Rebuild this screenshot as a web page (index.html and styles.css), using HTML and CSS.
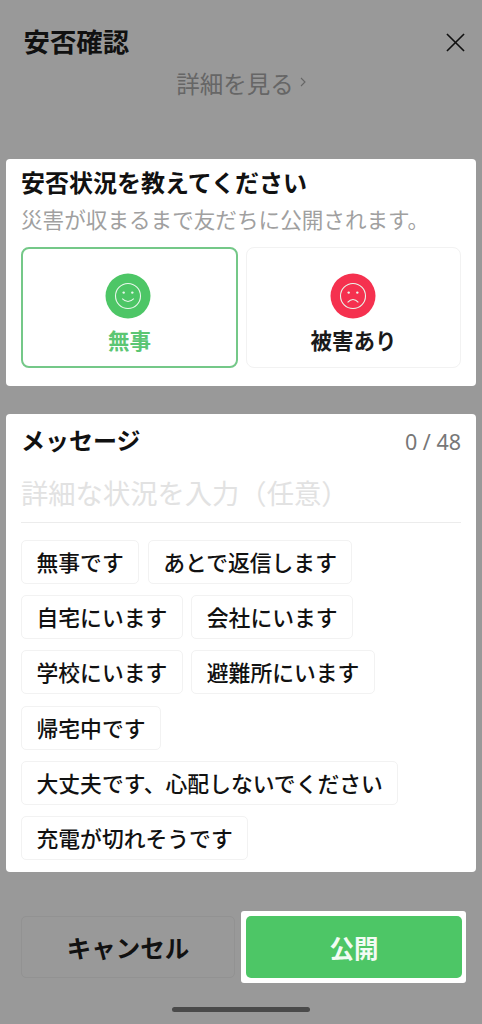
FILE: index.html
```html
<!DOCTYPE html>
<html lang="ja">
<head>
<meta charset="utf-8">
<title>安否確認</title>
<link rel="stylesheet" href="styles.css">
</head>
<body>
<div class="screen">
  <header class="header">
    <h1 class="title">安否確認</h1>
    <svg class="close" viewBox="0 0 20 20" aria-hidden="true"><path d="M1 1 L19 19 M19 1 L1 19"/></svg>
  </header>
  <div class="details"><span>詳細を見る</span><svg class="chev" viewBox="0 0 6 10" aria-hidden="true"><path d="M1 1 L5 5 L1 9"/></svg></div>

  <section class="card status">
    <h2 class="card-title">安否状況を教えてください</h2>
    <p class="sub">災害が収まるまで友だちに公開されます。</p>
    <div class="choices">
      <div class="choice on">
        <svg class="face" viewBox="0 0 46 46" aria-hidden="true"><circle class="safe" cx="23" cy="23" r="22.5"/><circle class="ring" cx="23" cy="23" r="12.5"/><circle class="eye" cx="18.7" cy="19.6" r="1.2"/><circle class="eye" cx="27.3" cy="19.6" r="1.2"/><path class="ring" d="M17.2 25.6 Q23 31.4 28.8 25.6"/></svg>
        <span class="choice-label">無事</span>
      </div>
      <div class="choice">
        <svg class="face" viewBox="0 0 46 46" aria-hidden="true"><circle class="hurt" cx="23" cy="23" r="22.5"/><circle class="ring" cx="23" cy="23" r="12.5"/><circle class="eye" cx="18.7" cy="19.6" r="1.2"/><circle class="eye" cx="27.3" cy="19.6" r="1.2"/><path class="ring" d="M17.6 29.4 Q23 23.6 28.4 29.4"/></svg>
        <span class="choice-label">被害あり</span>
      </div>
    </div>
  </section>

  <section class="card message">
    <div class="msg-head">
      <h2 class="card-title">メッセージ</h2>
      <span class="count">0 / 48</span>
    </div>
    <div class="input">詳細な状況を入力（任意）</div>
    <div class="chips">
      <span class="chip">無事です</span>
      <span class="chip">あとで返信します</span>
      <span class="chip">自宅にいます</span>
      <span class="chip">会社にいます</span>
      <span class="chip">学校にいます</span>
      <span class="chip">避難所にいます</span>
      <span class="chip">帰宅中です</span>
      <span class="chip">大丈夫です、心配しないでください</span>
      <span class="chip">充電が切れそうです</span>
    </div>
  </section>

  <footer class="actions">
    <div class="btn cancel">キャンセル</div>
    <div class="publish-wrap"><div class="btn publish">公開</div></div>
  </footer>
  <div class="home"></div>
</div>
</body>
</html>
```

FILE: styles.css
```css
* { box-sizing: border-box; }
html, body { margin: 0; padding: 0; }
body { width: 482px; height: 1024px; overflow: hidden; background: #999999; font-family: "Noto Sans CJK JP", "Noto Sans", sans-serif; color: #111; }
.screen { height: 1024px; display: flex; flex-direction: column; padding: 0 6px; }
.header { display: flex; justify-content: space-between; align-items: center; padding: 26px 11px 0 17.5px; height: 58px; }
.title { margin: -3px 0 0; font-size: 26.4px; line-height: 32px; font-weight: 700; color: #111; }
.close { width: 19px; height: 19px; fill: none; stroke: #111; stroke-width: 1.7; }
.details { display: flex; justify-content: center; align-items: flex-start; gap: 6px; margin-top: 10px; height: 30px; font-size: 23.5px; line-height: 30px; color: #666; }
.chev { width: 6px; height: 10px; margin-top: 9px; fill: none; stroke: #666; stroke-width: 1.1; }
.card { background: #fff; border-radius: 4px; padding: 0 15px; }
.status { margin-top: 60.5px; height: 227.5px; padding-top: 7px; }
.card-title { margin: 0; font-size: 24px; line-height: 32px; font-weight: 700; color: #111; }
.sub { margin: 7.5px 0 0; font-size: 21.6px; line-height: 28px; color: #a0a0a0; white-space: nowrap; }
.choices { display: grid; grid-template-columns: 217px 215px; gap: 8px; margin-top: 14px; }
.choice { height: 120.5px; border: 1px solid #f2f2f2; border-radius: 8px; display: flex; flex-direction: column; align-items: center; padding-top: 25px; }
.choice.on { border: 2px solid #74c888; padding-top: 24px; }
.face { width: 46px; height: 46px; display: block; margin-right: 2px; }
.on .face { margin-right: 3px; }
.safe { fill: #4dc666; }
.hurt { fill: #f5314f; }
.ring { fill: none; stroke: #e9f7ec; stroke-width: 1.1; }
.eye { fill: #e9f7ec; }
.choice-label { font-size: 21.5px; line-height: 30px; font-weight: 700; margin-top: 6px; color: #1a1a1a; }
.on .choice-label { color: #5cc673; }
.message { margin-top: 28px; height: 458px; padding-top: 10px; }
.msg-head { display: flex; justify-content: space-between; align-items: flex-start; }
.count { font-size: 21.5px; line-height: 32px; padding-top: 2px; color: #777; font-family: "Noto Sans", sans-serif; }
.input { margin-top: 15px; height: 50px; border-bottom: 1px solid #ececec; font-size: 27.3px; line-height: 38px; color: #e2e2e2; white-space: nowrap; }
.chips { display: flex; flex-wrap: wrap; gap: 11.4px 8.5px; margin-top: 16.5px; align-items: flex-start; }
.chip { display: block; height: 44px; padding: 0 14.5px; border: 1px solid #f2f2f2; border-radius: 5px; font-size: 21.8px; line-height: 42px; font-weight: 500; color: #111; white-space: nowrap; }
.actions { display: grid; grid-template-columns: 214px 225px; gap: 6px; margin: 39px 0 0 15px; align-items: center; width: 445px; }
.btn { border-radius: 5px; display: flex; align-items: center; justify-content: center; font-size: 24.5px; font-weight: 700; }
.cancel { height: 62px; border: 1px solid #929292; color: #111; }
.publish-wrap { background: #fff; border-radius: 3px; padding: 5px 4px 5px 5px; height: 72px; }
.publish { height: 62px; background: #4dc666; color: #f2fbf4; }
.home { width: 138px; height: 5px; background: #4a4a4a; border-radius: 3px; margin: 24px auto 0; }
```
